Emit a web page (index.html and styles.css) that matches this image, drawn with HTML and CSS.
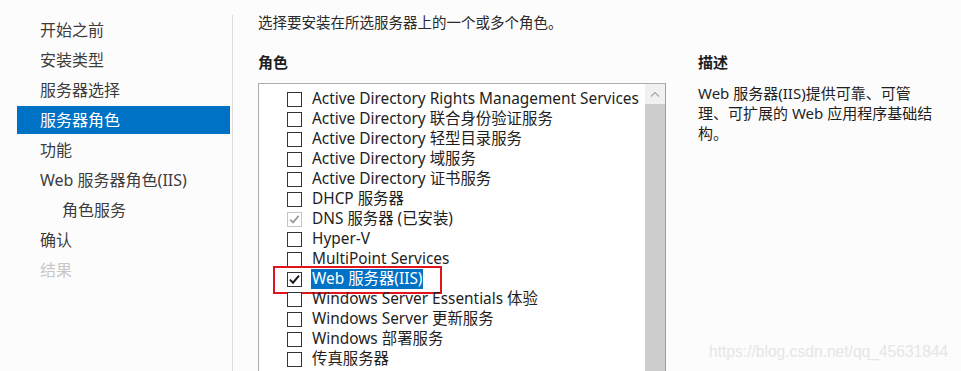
FILE: index.html
```html
<!DOCTYPE html>
<html lang="zh-CN">
<head>
<meta charset="utf-8">
<title>添加角色和功能向导</title>
<link rel="stylesheet" href="styles.css">
</head>
<body>
<div class="page">
  <nav class="sidebar">
    <div class="nav-item">开始之前</div>
    <div class="nav-item">安装类型</div>
    <div class="nav-item">服务器选择</div>
    <div class="nav-item active">服务器角色</div>
    <div class="nav-item">功能</div>
    <div class="nav-item">Web 服务器角色(IIS)</div>
    <div class="nav-item sub">角色服务</div>
    <div class="nav-item">确认</div>
    <div class="nav-item disabled">结果</div>
  </nav>
  <main class="main">
    <p class="intro">选择要安装在所选服务器上的一个或多个角色。</p>
    <div class="columns">
      <section class="roles">
        <h2 class="heading">角色</h2>
        <div class="listbox">
          <ul class="list">
            <li class="row"><span class="cb"></span><span class="label">Active Directory Rights Management Services</span></li>
            <li class="row"><span class="cb"></span><span class="label">Active Directory 联合身份验证服务</span></li>
            <li class="row"><span class="cb"></span><span class="label">Active Directory 轻型目录服务</span></li>
            <li class="row"><span class="cb"></span><span class="label">Active Directory 域服务</span></li>
            <li class="row"><span class="cb"></span><span class="label">Active Directory 证书服务</span></li>
            <li class="row"><span class="cb"></span><span class="label">DHCP 服务器</span></li>
            <li class="row"><span class="cb cb-disabled"><svg viewBox="0 0 15 15" width="15" height="15"><path d="M3.2 7.6 L6.1 10.4 L11.6 3.9" fill="none" stroke="#9a9a9a" stroke-width="1.7"/></svg></span><span class="label">DNS 服务器 (已安装)</span></li>
            <li class="row"><span class="cb"></span><span class="label">Hyper-V</span></li>
            <li class="row"><span class="cb"></span><span class="label">MultiPoint Services</span></li>
            <li class="row selected"><span class="cb"><svg viewBox="0 0 15 15" width="15" height="15"><path d="M2.9 7.6 L6 10.7 L12 3.6" fill="none" stroke="#1a1a1a" stroke-width="2"/></svg></span><span class="label hl">Web 服务器(IIS)</span><span class="annot"></span></li>
            <li class="row"><span class="cb"></span><span class="label">Windows Server Essentials 体验</span></li>
            <li class="row"><span class="cb"></span><span class="label">Windows Server 更新服务</span></li>
            <li class="row"><span class="cb"></span><span class="label">Windows 部署服务</span></li>
            <li class="row"><span class="cb"></span><span class="label">传真服务器</span></li>
          </ul>
          <div class="scrollbar">
            <div class="sb-arrow"><svg viewBox="0 0 10 6" width="10" height="6"><path d="M1 5.5 L5 1.5 L9 5.5" fill="none" stroke="#a6a6a6" stroke-width="1.2"/></svg></div>
            <div class="sb-thumb"></div>
          </div>
        </div>
      </section>
      <section class="desc">
        <h2 class="heading">描述</h2>
        <p class="desc-text">Web 服务器(IIS)提供可靠、可管<br>理、可扩展的 Web 应用程序基础结<br>构。</p>
      </section>
    </div>
  </main>
  <div class="watermark">https://blog.csdn.net/qq_45631844</div>
</div>
</body>
</html>
```
FILE: styles.css
```css
html, body {
  margin: 0;
  padding: 0;
  background: #fcfcfc;
}
body {
  font-family: "Noto Sans", "Noto Sans CJK SC", sans-serif;
  color: #1e1e1e;
  overflow: hidden;
}
.page {
  position: relative;
  display: flex;
  width: 961px;
  height: 371px;
  overflow: hidden;
}
.sidebar {
  width: 233px;
  margin-top: 15px;
  border-right: 1px solid #dcdcdc;
  padding-right: 2px;
  box-sizing: border-box;
  flex: none;
}
.nav-item {
  height: 30px;
  line-height: 30px;
  margin-left: 17px;
  padding-left: 23px;
  font-size: 16px;
  color: #3c3c3c;
  white-space: nowrap;
}
.nav-item.active {
  background: #0072c6;
  color: #fff;
  height: 28px;
  line-height: 28px;
  margin-top: 1px;
  margin-bottom: 1px;
}
.nav-item.sub {
  padding-left: 45px;
}
.nav-item.disabled {
  color: #c8c8c8;
}
.main {
  flex: 1;
  padding-left: 25px;
}
.intro {
  margin: 0;
  height: 44px;
  line-height: 44px;
  font-size: 14.5px;
  color: #2a2a2a;
}
.columns {
  display: flex;
  gap: 32px;
}
.heading {
  margin: 0;
  height: 39px;
  line-height: 36px;
  font-size: 15px;
  font-weight: bold;
  color: #1e1e1e;
}
.roles {
  width: 408px;
  flex: none;
}
.listbox {
  display: flex;
  border: 1px solid #adadad;
  border-right: none;
  height: 300px;
  background: #fff;
}
.list {
  list-style: none;
  margin: 0;
  padding: 5px 0 0 0;
  flex: 1;
}
.row {
  position: relative;
  display: flex;
  align-items: center;
  height: 20px;
  padding-left: 28px;
  font-size: 15.4px;
  white-space: nowrap;
  color: #1e1e1e;
}
.cb {
  width: 15px;
  height: 15px;
  border: 1px solid #333;
  box-sizing: border-box;
  background: #fff;
  flex: none;
  position: relative;
  margin-right: 10px;
}
.cb svg {
  display: block;
  position: absolute;
  left: -1px;
  top: -1px;
}
.cb-disabled {
  border-color: #c4c4c4;
}
.label {
  line-height: 20px;
}
.label.hl {
  background: #0072c6;
  color: #fff;
  padding: 0 1px;
  margin-left: -1px;
}
.annot {
  position: absolute;
  left: 14px;
  top: -3px;
  width: 169px;
  height: 28px;
  border: 2px solid #e0151b;
  box-sizing: border-box;
}
.scrollbar {
  width: 21px;
  display: flex;
  flex-direction: column;
  border-right: 1px solid #a0a0a0;
  box-sizing: border-box;
}
.sb-arrow {
  height: 20px;
  background: #f0f0f0;
  display: flex;
  align-items: center;
  justify-content: center;
}
.sb-thumb {
  flex: 1;
  background: #cdcdcd;
}
.desc {
  width: 245px;
}
.desc-text {
  margin: 0;
  font-size: 15px;
  line-height: 20px;
  color: #1e1e1e;
}
.watermark {
  position: absolute;
  left: 709px;
  top: 343px;
  font-family: "Liberation Sans", Arial, sans-serif;
  font-size: 15.6px;
  color: #e6e6e6;
  white-space: nowrap;
}
```
